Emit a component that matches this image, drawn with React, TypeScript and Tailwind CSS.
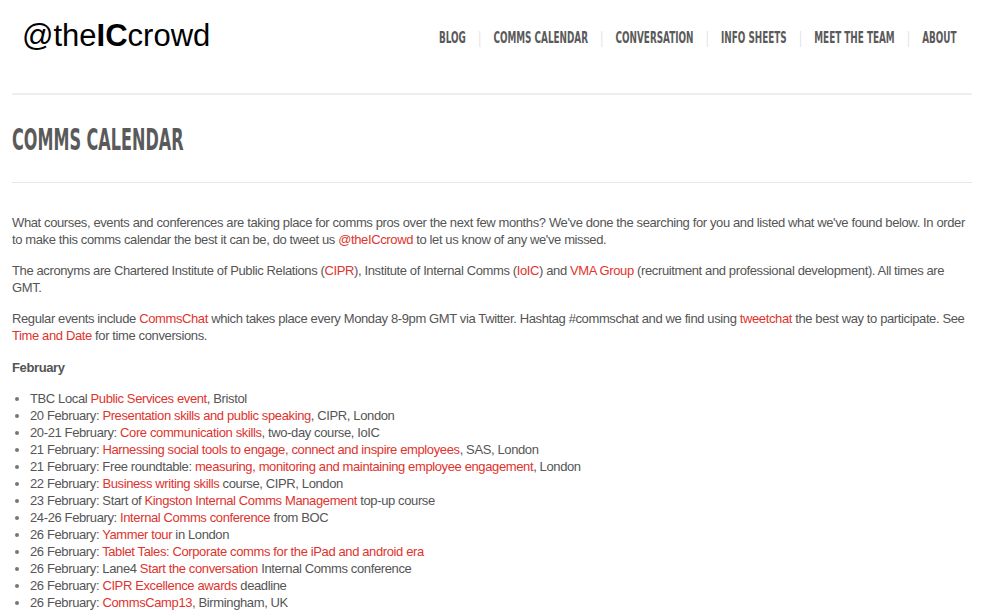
const nav = ["BLOG", "COMMS CALENDAR", "CONVERSATION", "INFO SHEETS", "MEET THE TEAM", "ABOUT"];

function A({ children }: { children: React.ReactNode }) {
  return <a href="#" className="text-[#e0332d]">{children}</a>;
}

const events: React.ReactNode[] = [
  <>TBC Local <A>Public Services event</A>, Bristol</>,
  <>20 February: <A>Presentation skills and public speaking</A>, CIPR, London</>,
  <>20-21 February: <A>Core communication skills</A>, two-day course, IoIC</>,
  <>21 February: <A>Harnessing social tools to engage, connect and inspire employees</A>, SAS, London</>,
  <>21 February: Free roundtable: <A>measuring, monitoring and maintaining employee engagement</A>, London</>,
  <>22 February: <A>Business writing skills</A> course, CIPR, London</>,
  <>23 February: Start of <A>Kingston Internal Comms Management</A> top-up course</>,
  <>24-26 February: <A>Internal Comms conference</A> from BOC</>,
  <>26 February: <A>Yammer tour</A> in London</>,
  <>26 February: <A>Tablet Tales: Corporate comms for the iPad and android era</A></>,
  <>26 February: Lane4 <A>Start the conversation</A> Internal Comms conference</>,
  <>26 February: <A>CIPR Excellence awards</A> deadline</>,
  <>26 February: <A>CommsCamp13</A>, Birmingham, UK</>,
];

export default function App() {
  return (
    <div className="min-h-screen overflow-hidden bg-white">
      <div className="ml-3 w-[960px] font-['Liberation_Sans',Arial,sans-serif] text-[13px] leading-[17px] tracking-[-0.38px] text-[#555]">
        <header className="flex h-[95px] items-start justify-between border-b-2 border-[#eee]">
          <div className="ml-[10px] mt-[18px] shrink-0 text-[31px] leading-[36px] tracking-normal text-black">
            @the<b>IC</b>crowd
          </div>
          <nav className="mr-[15px] mt-[29px] flex w-[520px] justify-end">
            <div className="flex shrink-0 origin-right scale-x-[0.615] items-center font-['DejaVu_Sans_Condensed',sans-serif] text-[16px] font-bold leading-[18px] tracking-normal text-[#5a5a5a]">
              {nav.map((n, i) => (
                <div key={n} className="flex items-center">
                  {i > 0 && <span className="mx-[20px] font-normal text-[#ddd]">|</span>}
                  <span className="whitespace-nowrap">{n}</span>
                </div>
              ))}
            </div>
          </nav>
        </header>

        <h1 className="flex h-[88px] items-center border-b border-[#e8e8e8] pt-[2px] font-['DejaVu_Sans_Condensed',sans-serif] text-[30px] font-bold tracking-normal text-[#5a5a5a]">
          <span className="inline-block origin-left scale-x-[0.595] whitespace-nowrap">COMMS CALENDAR</span>
        </h1>

        <div className="pt-[31px]">
          <p className="mb-[14px]">
            What courses, events and conferences are taking place for comms pros over the next few months? We've done the searching for you and listed what we've found below. In order to make this comms calendar the best it can be, do tweet us <A>@theICcrowd</A> to let us know of any we've missed.
          </p>
          <p className="mb-[14px]">
            The acronyms are Chartered Institute of Public Relations (<A>CIPR</A>), Institute of Internal Comms (<A>IoIC</A>) and <A>VMA Group</A> (recruitment and professional development). All times are GMT.
          </p>
          <p className="mb-[15px]">
            Regular events include <A>CommsChat</A> which takes place every Monday 8-9pm GMT via Twitter. Hashtag #commschat and we find using <A>tweetchat</A> the best way to participate. See <A>Time and Date</A> for time conversions.
          </p>
          <p className="mb-[14px] font-bold">February</p>
          <ul className="list-disc pl-[18px] marker:text-[#777]">
            {events.map((e, i) => (
              <li key={i}>{e}</li>
            ))}
          </ul>
        </div>
      </div>
    </div>
  );
}
